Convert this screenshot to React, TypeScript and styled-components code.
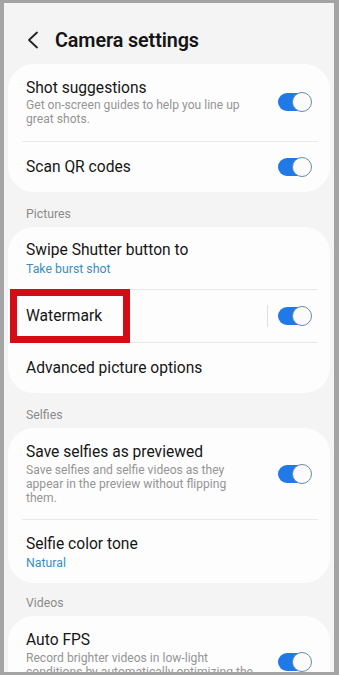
import React from "react";
import styled, { createGlobalStyle } from "styled-components";

const GlobalStyle = createGlobalStyle`
  html, body { margin: 0; padding: 0; background: #a4a4a4; }
  * { box-sizing: border-box; }
  body { font-family: Roboto, "Noto Sans", "Liberation Sans", sans-serif; -webkit-font-smoothing: antialiased; }
`;

const Frame = styled.div`
  width: 339px;
  height: 675px;
  padding: 3px 5px 3px 4px;
  background: #a4a4a4;
`;

const Screen = styled.div`
  height: 669px;
  background: #f4f4f4;
  overflow: hidden;
  padding: 0 4px;
`;

const Header = styled.header`
  height: 61px;
  padding: 13px 0 0 19px;
  display: flex;
  align-items: center;
  gap: 14px;
`;

const BackButton = styled.button`
  width: 14px;
  height: 20px;
  padding: 0;
  border: 0;
  background: none;
  display: flex;
  align-items: center;
  justify-content: flex-start;
`;

const Title = styled.h1`
  margin: 0;
  font-size: 19.8px;
  font-weight: 600;
  color: #151515;
  letter-spacing: -0.1px;
`;

const Card = styled.section`
  background: #fdfdfd;
  border-radius: 26px;
  padding: 0 18px;
`;

const SectionLabel = styled.div<{ $h: number }>`
  height: ${(p) => p.$h}px;
  display: flex;
  align-items: flex-end;
  padding: 0 0 6px 18px;
  font-size: 12.3px;
  line-height: 14px;
  color: #8b8b8b;
`;

const Row = styled.div<{ $minH?: number; $pad?: string }>`
  position: relative;
  display: flex;
  align-items: center;
  min-height: ${(p) => p.$minH ?? 0}px;
  padding: ${(p) => p.$pad ?? "0"};
`;

const TextBlock = styled.div`
  flex: 1;
  display: flex;
  flex-direction: column;
  min-width: 0;
`;

const RowTitle = styled.div`
  font-size: 15.6px;
  line-height: 20px;
  color: #161616;
  white-space: nowrap;
`;

const RowDesc = styled.div<{ $lh?: number }>`
  margin-top: 1px;
  font-size: 12.1px;
  line-height: ${(p) => p.$lh ?? 14}px;
  color: #959595;
  white-space: nowrap;
`;

const RowValue = styled.div`
  margin-top: 1px;
  font-size: 12.3px;
  line-height: 16px;
  color: #3b8dc3;
`;

const Divider = styled.div`
  height: 1px;
  margin: 0 -6px 0 -4px;
  background: #e9e9e9;
`;

const VSep = styled.div`
  width: 1px;
  height: 22px;
  background: #dedede;
  margin-right: 10px;
`;

const Track = styled.div`
  position: relative;
  width: 34px;
  height: 20px;
  flex: none;
`;

const TrackFill = styled.div`
  position: absolute;
  left: 0;
  top: 1px;
  width: 30px;
  height: 18px;
  border-radius: 9px;
  background: #1f7ae8;
`;

const Knob = styled.div`
  position: absolute;
  right: 0;
  top: 0;
  width: 20px;
  height: 20px;
  border-radius: 50%;
  background: #fbfbfb;
  border: 1.4px solid #6f8aa3;
`;

const Highlight = styled.div`
  position: absolute;
  left: -16px;
  top: -1px;
  width: 120px;
  height: 54px;
  border: 7px solid #d30c16;
  pointer-events: none;
`;

const Toggle = () => (
  <Track>
    <TrackFill />
    <Knob />
  </Track>
);

const Chevron = () => (
  <svg width="12" height="18" viewBox="0 0 12 18" fill="none">
    <path d="M10 1.5 L2 9 L10 16.5" stroke="#222" strokeWidth="1.8" strokeLinecap="round" strokeLinejoin="round" />
  </svg>
);

export default function App() {
  return (
    <>
      <GlobalStyle />
      <Frame>
        <Screen>
          <Header>
            <BackButton aria-label="Back">
              <Chevron />
            </BackButton>
            <Title>Camera settings</Title>
          </Header>

          <Card>
            <Row $pad="14px 0 15px">
              <TextBlock>
                <RowTitle>Shot suggestions</RowTitle>
                <RowDesc $lh={13.5}>
                  Get on-screen guides to help you line up
                  <br />
                  great shots.
                </RowDesc>
              </TextBlock>
              <Toggle />
            </Row>
            <Divider />
            <Row $minH={50}>
              <TextBlock>
                <RowTitle>Scan QR codes</RowTitle>
              </TextBlock>
              <Toggle />
            </Row>
          </Card>

          <SectionLabel $h={35}>Pictures</SectionLabel>
          <Card>
            <Row $pad="13px 0 12px">
              <TextBlock>
                <RowTitle>Swipe Shutter button to</RowTitle>
                <RowValue>Take burst shot</RowValue>
              </TextBlock>
            </Row>
            <Divider />
            <Row $minH={52}>
              <Highlight />
              <TextBlock>
                <RowTitle>Watermark</RowTitle>
              </TextBlock>
              <VSep />
              <Toggle />
            </Row>
            <Divider />
            <Row $minH={50}>
              <TextBlock>
                <RowTitle>Advanced picture options</RowTitle>
              </TextBlock>
            </Row>
          </Card>

          <SectionLabel $h={35}>Selfies</SectionLabel>
          <Card>
            <Row $pad="14px 0 14px">
              <TextBlock>
                <RowTitle>Save selfies as previewed</RowTitle>
                <RowDesc>
                  Save selfies and selfie videos as they
                  <br />
                  appear in the preview without flipping
                  <br />
                  them.
                </RowDesc>
              </TextBlock>
              <Toggle />
            </Row>
            <Divider />
            <Row $pad="14px 0 12px">
              <TextBlock>
                <RowTitle>Selfie color tone</RowTitle>
                <RowValue>Natural</RowValue>
              </TextBlock>
            </Row>
          </Card>

          <SectionLabel $h={33}>Videos</SectionLabel>
          <Card>
            <Row $pad="14px 0 14px">
              <TextBlock>
                <RowTitle>Auto FPS</RowTitle>
                <RowDesc>
                  Record brighter videos in low-light
                  <br />
                  conditions by automatically optimizing the
                  <br />
                  frame rate.
                </RowDesc>
              </TextBlock>
              <Toggle />
            </Row>
          </Card>
        </Screen>
      </Frame>
    </>
  );
}
